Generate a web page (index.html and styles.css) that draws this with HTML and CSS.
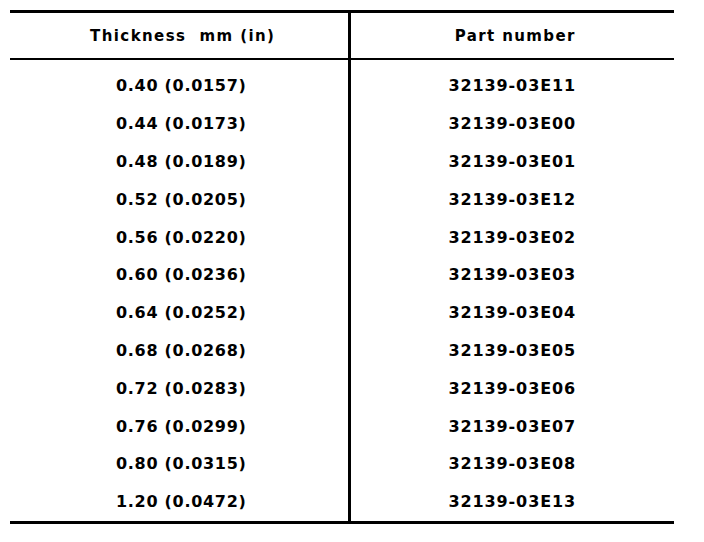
FILE: index.html
```html
<!DOCTYPE html>
<html lang="en">
<head>
    <meta charset="UTF-8">
    <title>Shim thickness</title>
    <link rel="stylesheet" href="styles.css">
</head>
<body>

<table class="parts">
    <colgroup>
        <col class="col-thickness">
        <col class="col-part">
    </colgroup>
    <thead>
        <tr>
            <th>Thickness&nbsp; mm (in)</th>
            <th>Part number</th>
        </tr>
    </thead>
    <tbody>
        <tr><td>0.40 (0.0157)</td><td>32139-03E11</td></tr>
        <tr><td>0.44 (0.0173)</td><td>32139-03E00</td></tr>
        <tr><td>0.48 (0.0189)</td><td>32139-03E01</td></tr>
        <tr><td>0.52 (0.0205)</td><td>32139-03E12</td></tr>
        <tr><td>0.56 (0.0220)</td><td>32139-03E02</td></tr>
        <tr><td>0.60 (0.0236)</td><td>32139-03E03</td></tr>
        <tr><td>0.64 (0.0252)</td><td>32139-03E04</td></tr>
        <tr><td>0.68 (0.0268)</td><td>32139-03E05</td></tr>
        <tr><td>0.72 (0.0283)</td><td>32139-03E06</td></tr>
        <tr><td>0.76 (0.0299)</td><td>32139-03E07</td></tr>
        <tr><td>0.80 (0.0315)</td><td>32139-03E08</td></tr>
        <tr><td>1.20 (0.0472)</td><td>32139-03E13</td></tr>
    </tbody>
</table>

</body>
</html>
```
FILE: styles.css
```css
body {
    margin: 0;
    padding: 10px 0 0 10px;
    background: white;
    color: black;
    font-family: 'DejaVu Sans', 'Liberation Sans', sans-serif;
}

.parts {
    width: 664px;
    table-layout: fixed;
    border-collapse: collapse;
    border-top: 3px solid black;
    border-bottom: 3px solid black;
}

.col-thickness {
    width: 339px;
}

.parts th,
.parts td {
    padding: 0;
    text-align: center;
    font-weight: bold;
}

.parts th:first-child,
.parts td:first-child {
    border-right: 3px solid black;
}

/* header */
.parts th {
    height: 45px;
    font-size: 15px;
    letter-spacing: 1.4px;
    border-bottom: 2px solid black;
}

.parts th:first-child {
    padding-left: 8px;
}

.parts th:last-child {
    padding-left: 6px;
}

/* body rows */
.parts td {
    height: 37.8px;
    font-size: 16px;
}

.parts td:first-child {
    letter-spacing: 0.7px;
    padding-left: 5px;
}

.parts td:last-child {
    letter-spacing: 0.9px;
}

.parts tbody tr:first-child td {
    padding-top: 7px;
}
```
